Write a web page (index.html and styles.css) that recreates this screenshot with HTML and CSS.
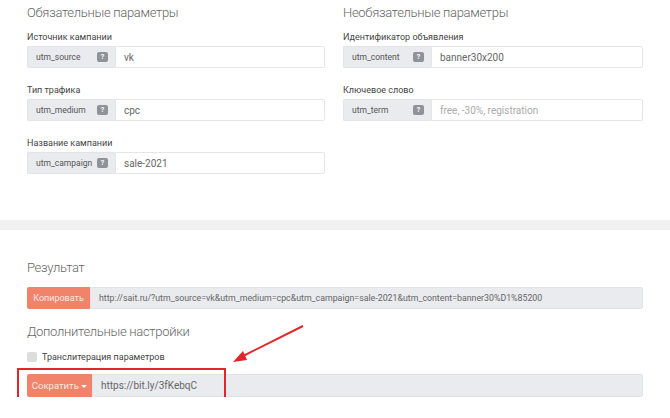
FILE: index.html
```html
<!DOCTYPE html>
<html>
<head>
  <meta name="viewport" content="width=device-width, initial-scale=1.0">
  <title>UTM-генератор</title>
  <link rel="stylesheet" href="styles.css">
</head>
<body>
  <div class="page">
    <!-- Parameters -->
    <div class="params">
      <div class="col col-left">
        <h2>Обязательные параметры</h2>

        <div class="field">
          <label>Источник кампании</label>
          <div class="group">
            <span class="addon">utm_source <i class="hint">?</i></span>
            <span class="value">vk</span>
          </div>
        </div>

        <div class="field">
          <label>Тип трафика</label>
          <div class="group">
            <span class="addon">utm_medium <i class="hint">?</i></span>
            <span class="value">cpc</span>
          </div>
        </div>

        <div class="field">
          <label>Название кампании</label>
          <div class="group">
            <span class="addon">utm_campaign <i class="hint">?</i></span>
            <span class="value">sale-2021</span>
          </div>
        </div>
      </div>

      <div class="col col-right">
        <h2>Необязательные параметры</h2>

        <div class="field">
          <label>Идентификатор объявления</label>
          <div class="group">
            <span class="addon">utm_content <i class="hint">?</i></span>
            <span class="value">banner30x200</span>
          </div>
        </div>

        <div class="field">
          <label>Ключевое слово</label>
          <div class="group">
            <span class="addon">utm_term <i class="hint">?</i></span>
            <span class="value placeholder">free, -30%, registration</span>
          </div>
        </div>
      </div>
    </div>
  </div>

  <div class="band"></div>

  <!-- Result -->
  <div class="page result">
    <h2>Результат</h2>
    <div class="group wide">
      <button class="btn">Копировать</button>
      <span class="value filled url">http://sait.ru/?utm_source=vk&amp;utm_medium=cpc&amp;utm_campaign=sale-2021&amp;utm_content=banner30%D1%85200</span>
    </div>

    <h2 class="sub">Дополнительные настройки</h2>
    <div class="check">
      <span class="box"></span>
      Транслитерация параметров
    </div>

    <div class="group wide short">
      <button class="btn">Сократить <span class="caret"></span></button>
      <span class="value filled">https://bit.ly/3fKebqC</span>
    </div>

    <!-- annotation -->
    <div class="mark"></div>
    <svg class="arrow" width="90" height="50" viewBox="0 0 90 50">
      <line x1="75" y1="7" x2="13" y2="38" stroke="#e3262b" stroke-width="2"/>
      <polygon points="5,43 15,32 19,41" fill="#e3262b"/>
    </svg>
  </div>
</body>
</html>
```

FILE: styles.css
```css
body {
  margin: 0;
  padding: 0;
  background: #fff;
  font-family: Roboto, "Noto Sans", sans-serif;
  color: #555;
}

.page {
  padding: 0 27px;
}

h2 {
  margin: 0;
  font-size: 13px;
  letter-spacing: -0.3px;
  line-height: 20px;
  font-weight: 300;
  color: #666;
}

/* two columns of parameters */
.params {
  display: flex;
  gap: 18px;
  padding-top: 3px;
  height: 217px;
  box-sizing: border-box;
}

.col-left {
  width: 298px;
}

.col-right {
  width: 300px;
}

.col h2 {
  margin-bottom: 7px;
}

.field {
  margin-bottom: 15px;
}

.field label {
  display: block;
  font-size: 9px;
  line-height: 14px;
  color: #444;
  margin-bottom: 2px;
}

.group {
  display: flex;
  height: 22px;
  font-size: 9px;
}

.addon {
  display: flex;
  align-items: center;
  justify-content: space-between;
  flex-shrink: 0;
  width: 88px;
  padding: 0 7px 0 8px;
  box-sizing: border-box;
  background: #e9ebee;
  border: 1px solid #e2e4e7;
  border-right: none;
  border-radius: 2px 0 0 2px;
  font-size: 8.5px;
  color: #555;
}

.hint {
  display: inline-block;
  flex-shrink: 0;
  width: 11px;
  height: 10px;
  line-height: 10px;
  text-align: center;
  font-style: normal;
  font-size: 7px;
  font-weight: bold;
  color: #fff;
  background: #8e9399;
  border-radius: 2px;
}

.value {
  flex: 1;
  display: flex;
  align-items: center;
  padding-left: 8px;
  border: 1px solid #e6e6e6;
  border-radius: 0 2px 2px 0;
  color: #666;
  font-size: 10px;
  white-space: nowrap;
  overflow: hidden;
}

.placeholder {
  color: #aaa;
}

.band {
  height: 10px;
  background: #f1f1f1;
  margin-top: 3px;
}

/* result block */
.result {
  position: relative;
  padding-top: 28px;
  width: 616px;
}

.result h2 {
  margin-bottom: 9px;
}

.wide .value.filled {
  background: #e9ebee;
  border-color: #e0e2e5;
  color: #666;
}

.wide .value.url {
  font-size: 8.8px;
}

.btn {
  flex-shrink: 0;
  width: 63px;
  border: none;
  margin: 0;
  padding: 0;
  background: #f0836a;
  color: #fde9e3;
  font-family: inherit;
  font-size: 9px;
  border-radius: 2px 0 0 2px;
  height: 22px;
}

.result h2.sub {
  margin-top: 13px;
  margin-bottom: 8px;
}

.check {
  display: flex;
  align-items: center;
  gap: 5px;
  font-size: 9px;
  line-height: 14px;
  color: #444;
}

.box {
  width: 10px;
  height: 10px;
  background: #dcdcdc;
  border-radius: 2px;
}

.short {
  margin-top: 10px;
  height: 23px;
}

.short .btn {
  height: 23px;
  width: 65px;
  font-size: 9.5px;
}

.caret {
  display: inline-block;
  width: 0;
  height: 0;
  border-left: 3px solid transparent;
  border-right: 3px solid transparent;
  border-top: 3px solid #fff;
  vertical-align: middle;
}

.mark {
  position: absolute;
  left: 17px;
  top: 138px;
  width: 205px;
  height: 30px;
  border: 2px solid #e3262b;
}

.arrow {
  position: absolute;
  left: 228px;
  top: 89px;
}
```
